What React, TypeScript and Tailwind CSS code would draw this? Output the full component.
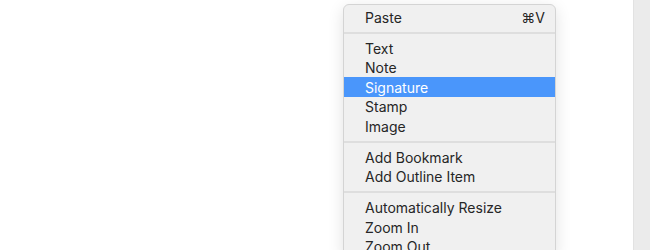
import React from "react";

type Item = { label: string; shortcut?: string; active?: boolean } | "sep";

const items: Item[] = [
  { label: "Paste", shortcut: "⌘V" },
  "sep",
  { label: "Text" },
  { label: "Note" },
  { label: "Signature", active: true },
  { label: "Stamp" },
  { label: "Image" },
  "sep",
  { label: "Add Bookmark" },
  { label: "Add Outline Item" },
  "sep",
  { label: "Automatically Resize" },
  { label: "Zoom In" },
  { label: "Zoom Out" },
];

export default function App() {
  return (
    <div
      className="relative flex h-[250px] w-[650px] overflow-hidden bg-white"
      style={{ fontFamily: "Inter, 'Noto Sans', sans-serif" }}
    >
      <div className="flex-1 bg-white" />
      <div className="w-[17px] border-l border-[#e2e2e2] bg-[#ebebeb]" />
      <div className="absolute left-[343px] top-[4px] w-[213px] rounded-[6px] border border-[#d4d4d4] bg-[#f0f0f0] pt-[2.25px] shadow-[0_4px_16px_rgba(0,0,0,0.12)]">
        {items.map((it, i) =>
          it === "sep" ? (
            <div key={i} className="flex h-[11.5px] items-center">
              <div className="h-[2px] w-full bg-[#dedede]" />
            </div>
          ) : (
            <div
              key={i}
              className={
                "flex h-[19.5px] items-center justify-between pl-[21px] pr-[10px] pt-[1px] text-[14px] leading-none " +
                (it.active ? "bg-[#4a96fb] text-white" : "text-[#262626]")
              }
            >
              <span>{it.label}</span>
              {it.shortcut && <span>{it.shortcut}</span>}
            </div>
          )
        )}
      </div>
    </div>
  );
}
